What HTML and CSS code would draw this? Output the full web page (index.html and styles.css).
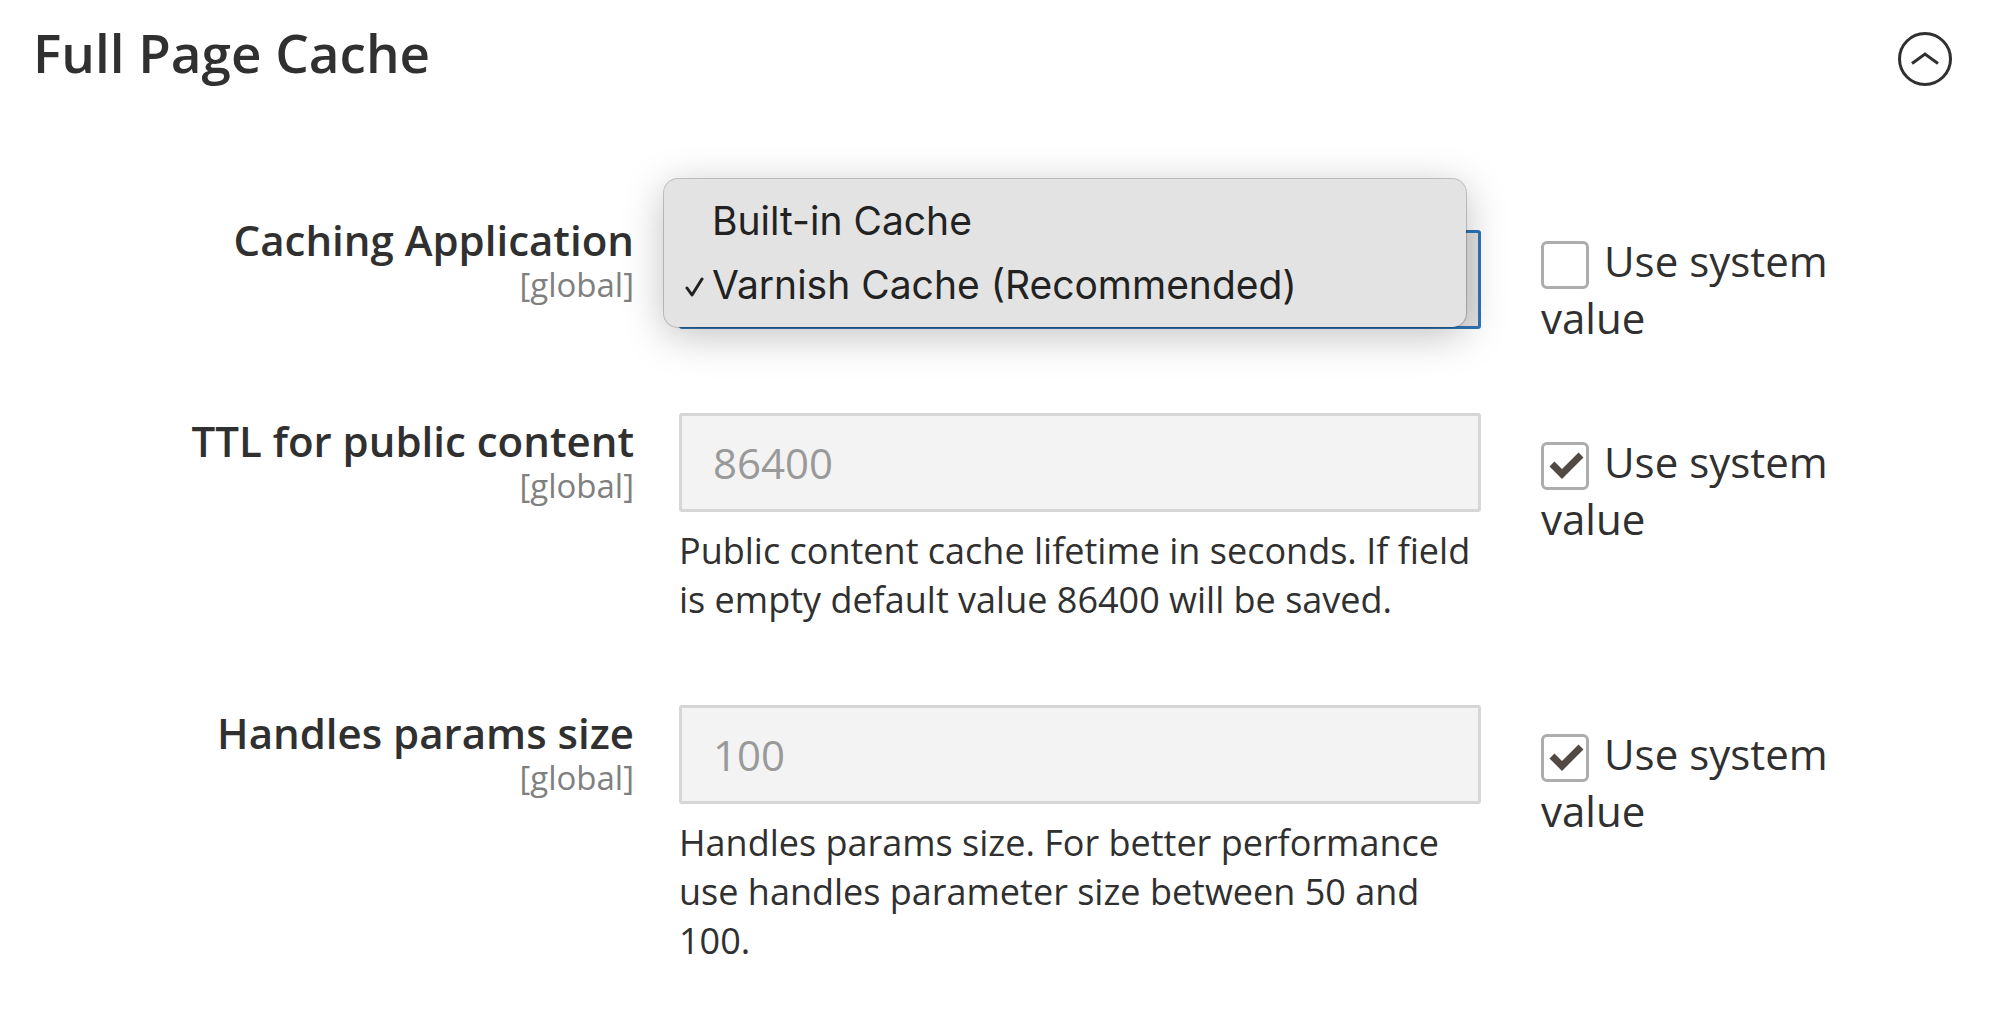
FILE: index.html
```html
<!DOCTYPE html>
<html lang="en">
<head>
  <meta charset="UTF-8">
  <title>Full Page Cache</title>
  <link rel="stylesheet" href="styles.css">
</head>
<body>
  <form class="section">
    <div class="section-header">
      <h2>Full Page Cache</h2>
      <button type="button" class="toggle" aria-label="Collapse section">
        <svg viewBox="0 0 54 54" fill="none" stroke="#303030" stroke-width="3">
          <circle cx="27" cy="27" r="25.5"/>
          <path d="M14 31.5 27 22l13 9.5"/>
        </svg>
      </button>
    </div>

    <div class="row row-select">
      <div class="label">
        <label for="application">Caching Application</label>
        <span class="scope">[global]</span>
      </div>
      <div class="value">
        <select id="application" class="control">
          <option value="1"></option>
          <option value="2" selected></option>
        </select>
        <ul class="menu" role="listbox" aria-label="Caching Application">
          <li role="option">Built-in Cache</li>
          <li role="option" aria-selected="true">
            <svg class="menu-check" viewBox="0 0 20 20" fill="none" stroke="#222" stroke-width="3" stroke-linecap="round" stroke-linejoin="round"><path d="M3 11l5 7L18 2"/></svg>Varnish Cache (Recommended)
          </li>
        </ul>
      </div>
      <div class="inherit">
        <input type="checkbox" id="applicationInherit"><label for="applicationInherit">Use system value</label>
      </div>
    </div>

    <div class="row">
      <div class="label">
        <label for="ttl">TTL for public content</label>
        <span class="scope">[global]</span>
      </div>
      <div class="value">
        <input type="text" id="ttl" class="control" value="86400" disabled>
        <p class="note">Public content cache lifetime in seconds. If field is empty default value 86400 will be saved.</p>
      </div>
      <div class="inherit">
        <input type="checkbox" id="ttlInherit" checked><label for="ttlInherit">Use system value</label>
      </div>
    </div>

    <div class="row">
      <div class="label">
        <label for="handles">Handles params size</label>
        <span class="scope">[global]</span>
      </div>
      <div class="value">
        <input type="text" id="handles" class="control" value="100" disabled>
        <p class="note">Handles params size. For better performance use handles parameter size between 50 and 100.</p>
      </div>
      <div class="inherit">
        <input type="checkbox" id="handlesInherit" checked><label for="handlesInherit">Use system value</label>
      </div>
    </div>
  </form>
</body>
</html>
```
FILE: styles.css
```css
* {
  box-sizing: border-box;
}
body {
  margin: 0;
  background: #fff;
  color: #303030;
  font-family: "Open Sans", "Noto Sans", sans-serif;
  font-size: 42px;
}
.section {
  padding: 18px 48px 0 33px;
}
.section-header {
  display: flex;
  justify-content: space-between;
  align-items: flex-start;
  margin-bottom: 124px;
}
h2 {
  margin: 0;
  font-size: 53px;
  font-weight: 600;
  line-height: 70px;
}
.toggle {
  width: 54px;
  height: 54px;
  margin-top: 14px;
  padding: 0;
  border: 0;
  background: none;
  cursor: pointer;
}
.toggle svg {
  display: block;
}
.row {
  display: grid;
  grid-template-columns: 601fr 802fr 324fr;
  column-gap: 45px;
  align-items: start;
  padding: 0 102px 81px 0;
}
.row-select {
  padding-bottom: 67px;
}
.label {
  padding-top: 3px;
  text-align: right;
  font-weight: 600;
  line-height: 50px;
}
.label label {
  display: block;
}
.scope {
  display: block;
  color: #808080;
  font-size: 33px;
  font-weight: 400;
  line-height: 40px;
}
.value {
  position: relative;
}
.control {
  display: block;
  width: 100%;
  height: 99px;
  padding: 0 31px;
  border: 3px solid #d6d6d6;
  border-radius: 3px;
  background: #f3f3f3;
  color: #999;
  font-family: inherit;
  font-size: 42px;
}
select.control {
  margin-top: 18px;
  border-color: #2f75b5;
  background: #e3e3e3;
  appearance: none;
}
/* open list, drawn over the select */
.menu {
  position: absolute;
  top: -33px;
  left: -15px;
  right: 15px;
  margin: 0;
  padding: 10px 0;
  border-radius: 14px;
  background: #e3e3e3;
  box-shadow: 0 0 0 1px rgba(0, 0, 0, 0.2), 0 8px 40px rgba(0, 0, 0, 0.25);
  color: #222;
  font-family: Inter, sans-serif;
  font-size: 39px;
  line-height: 64px;
  list-style: none;
}
.menu li {
  position: relative;
  padding-left: 48px;
}
.menu-check {
  position: absolute;
  top: 24px;
  left: 20px;
  width: 20px;
  height: 20px;
}
.note {
  margin: 14px 0 0;
  font-size: 36px;
  line-height: 49px;
}
.inherit {
  padding: 20px 0 0 15px;
  line-height: 57px;
}
.inherit input {
  width: 48px;
  height: 48px;
  margin: 0 15px 0 0;
  border: 3px solid #adadad;
  border-radius: 6px;
  background: #fff;
  vertical-align: -12px;
  appearance: none;
}
.inherit input:checked {
  background: #fff url("data:image/svg+xml,%3Csvg xmlns='http://www.w3.org/2000/svg' viewBox='0 0 42 42'%3E%3Cpath d='M8 19l10 10L37 10' fill='none' stroke='%23514943' stroke-width='7'/%3E%3C/svg%3E") center / 42px 42px no-repeat;
}
```
